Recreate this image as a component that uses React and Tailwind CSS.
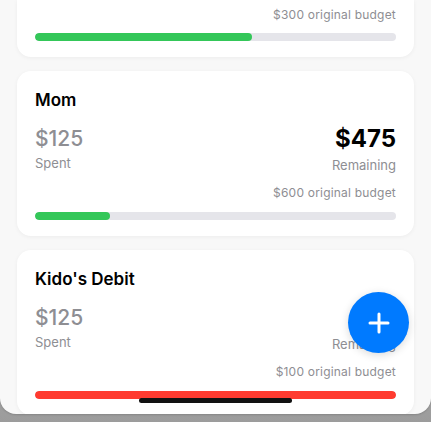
import React from 'react'

const budgets = [
    { name: 'Groceries', spent: 180, total: 300, color: 'bg-[#34c759]', partial: true },
    { name: 'Mom', spent: 125, total: 600, color: 'bg-[#34c759]' },
    { name: "Kido's Debit", spent: 125, total: 100, color: 'bg-[#ff3b30]' },
]

function BudgetCard({ item }) {
    const remaining = item.total - item.spent
    const pct = Math.min(100, (item.spent / item.total) * 100)

    // la primera tarjeta esta scrolleada, solo se ve la parte de abajo
    if (item.partial) {
        return (
            <div className="bg-white rounded-b-[14px] shadow-[0_1px_4px_rgba(0,0,0,0.05)] px-[18px] pt-[7px] pb-[16px]">
                <div className="text-right text-[12px] leading-[16px] tracking-[0.2px] text-[#8e8e93]">
                    ${item.total} original budget
                </div>
                <div className="h-[8px] rounded-full bg-[#e5e5ea] mt-[10px] overflow-hidden">
                    <div className={`h-full rounded-full ${item.color}`} style={{ width: `${pct}%` }} />
                </div>
            </div>
        )
    }

    return (
        <div className="bg-white rounded-[14px] shadow-[0_1px_4px_rgba(0,0,0,0.05)] px-[18px] pt-[18px] pb-[16px]">
            <h3 className="text-[17px] leading-[22px] font-semibold text-black">{item.name}</h3>
            <div className="flex justify-between items-start mt-[14px]">
                <div>
                    <div className="text-[21px] leading-[28px] font-medium text-[#8e8e93]">${item.spent}</div>
                    <div className="text-[13px] leading-[18px] text-[#8e8e93] mt-[1px]">Spent</div>
                </div>
                <div className="text-right">
                    <div className="text-[24px] leading-[28px] font-bold text-black">${remaining < 0 ? 0 : remaining}</div>
                    <div className="text-[13px] leading-[18px] text-[#8e8e93] mt-[3px]">Remaining</div>
                </div>
            </div>
            <div className="text-right text-[12px] leading-[16px] tracking-[0.2px] text-[#8e8e93] mt-[11px]">
                ${item.total} original budget
            </div>
            <div className="h-[8px] rounded-full bg-[#e5e5ea] mt-[11px] overflow-hidden">
                <div className={`h-full rounded-full ${item.color}`} style={{ width: `${pct}%` }} />
            </div>
        </div>
    )
}

export default function App() {
    return (
        <div className="w-[431px] h-[422px] bg-gradient-to-b from-[#dcdcdc] to-[#9c9c9c] overflow-hidden" style={{ fontFamily: 'Inter, "Noto Sans", sans-serif' }}>
            <div className="relative h-[414px] bg-[#f8f8f8] rounded-b-[16px] overflow-hidden shadow-[0_1px_2px_rgba(0,0,0,0.15)]">
                {/* lista de presupuestos */}
                <div className="flex flex-col gap-[14px] px-[17px]">
                    {budgets.map((b) => (
                        <BudgetCard key={b.name} item={b} />
                    ))}
                </div>

                {/* boton agregar */}
                <button className="absolute right-[22px] bottom-[61px] w-[61px] h-[61px] rounded-full bg-[#007aff] flex items-center justify-center shadow-[0_2px_8px_rgba(0,0,0,0.15)]">
                    <svg width="22" height="22" viewBox="0 0 22 22" fill="none" stroke="white" strokeWidth="3" strokeLinecap="round">
                        <path d="M11 2v18M2 11h18" />
                    </svg>
                </button>

                {/* home indicator */}
                <div className="absolute left-[139px] bottom-[11px] w-[153px] h-[5px] rounded-full bg-[#111]" />
            </div>
        </div>
    )
}
